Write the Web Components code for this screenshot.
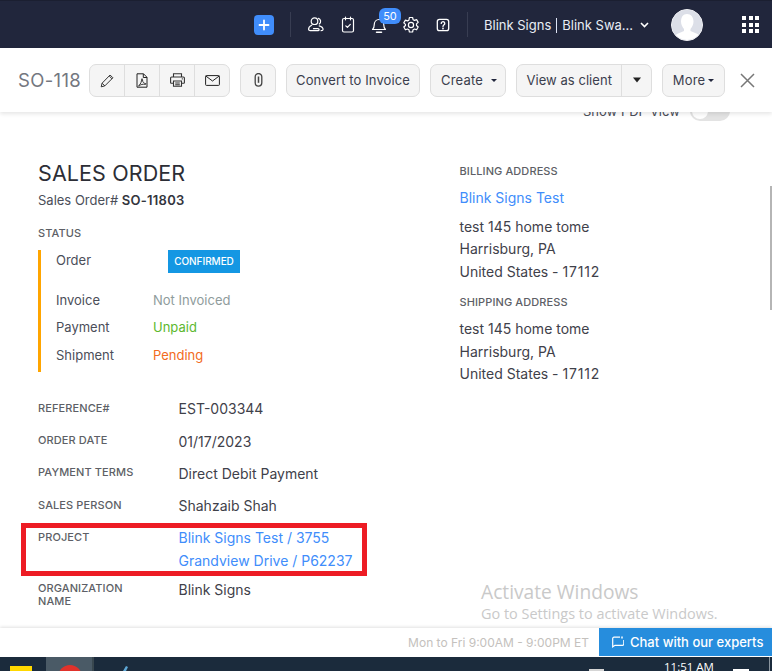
<!DOCTYPE html>
<html lang="en"><head><meta charset="utf-8"><title>Sales Order</title>
<style>html,body{margin:0;padding:0;height:100%;background:#fff;overflow:hidden}body{font-family:Inter,"Liberation Sans",sans-serif}</style>
</head><body>
<app-shell>
  <top-bar slot="top"></top-bar>
  <tool-bar slot="tools"></tool-bar>
  <order-view slot="main"></order-view>
  <help-bar slot="help"></help-bar>
  <task-bar slot="task"></task-bar>
</app-shell>
<script>
function def(name, html){
  customElements.define(name, class extends HTMLElement{
    constructor(){super();this.attachShadow({mode:'open'}).innerHTML=html;}
  });
}
def('app-shell',`<style>:host{display:flex;flex-direction:column;width:772px;height:671px;overflow:hidden}
.m{flex:1;min-height:0;display:flex;overflow:hidden;position:relative}</style>
<slot name="top"></slot><slot name="tools"></slot><div class="m"><slot name="main"></slot></div><slot name="help"></slot><slot name="task"></slot>`);

def('top-bar',`<style>:host{display:flex;align-items:center;flex:none;height:48px;background:#21263c;color:#fff;box-sizing:border-box;border-top:1px solid #1b1f31;font:13px Inter,sans-serif}
.plus{margin-left:254px;width:20px;height:20px;border-radius:4px;background:#408dfb;display:flex;align-items:center;justify-content:center}
.sep{width:1px;height:25px;background:#383d52}
.ic{display:flex;align-items:center;justify-content:center;width:18px;height:18px;position:relative}
svg{display:block}
.badge{position:absolute;left:9px;top:-8px;width:22px;height:16px;border-radius:6px;background:#408dfb;font-size:11px;line-height:16px;text-align:center;color:#fff}
.org{margin-left:16px;font-size:13px;color:#e8edf5;white-space:nowrap}
.org i{display:inline-block;width:1px;height:15px;background:#dfe4f5;vertical-align:-3px;margin:0 5px 0 5px}
.av{margin-left:22px;width:32px;height:32px;border-radius:50%;background:#dcdfe8;overflow:hidden;border:1px solid #f3f3f6;box-sizing:border-box}
.grid{margin-left:39px;display:grid;grid-template-columns:repeat(3,4px);gap:2.5px}.grid b{width:4px;height:4px;background:#fff;display:block}
</style>
<div class="plus"><svg width="12" height="12" viewBox="0 0 12 12"><path d="M6 1.500v9M1.500 6h9" stroke="#fff" stroke-width="1.800" stroke-linecap="round"/></svg></div>
<div class="sep" style="margin-left:16px"></div>
<div class="ic" style="margin-left:16px"><svg width="18" height="18" viewBox="0 0 18 18" fill="none" stroke="#fff" stroke-width="1.200" stroke-linecap="round"><circle cx="7.500" cy="5.200" r="3.300"/><path d="M11.500 2.400a3.200 3.200 0 0 1 .8 5.600M4.600 9.200C2.800 10 1.500 11.500 1.600 13.200c0 1.300 1.400 1.500 3 1.500h6.400c1.500 0 1.500-2 0-2H6.500M12.200 9.800c1.900.5 3.800 1.800 3.900 3.400 0 1-.8 1.500-2 1.500"/></svg></div>
<div class="ic" style="margin-left:14px"><svg width="16" height="18" viewBox="0 0 16 18" fill="none" stroke="#fff" stroke-width="1.200" stroke-linecap="round" stroke-linejoin="round"><rect x="2.500" y="2.500" width="11" height="13.500" rx="1.500"/><path d="M5.500 1v2.800M10.500 1v2.800M5.800 9.800l1.600 1.600 2.900-3"/></svg></div>
<div class="ic" style="margin-left:13px"><svg width="18" height="18" viewBox="0 0 18 18" fill="none" stroke="#fff" stroke-width="1.200" stroke-linecap="round" stroke-linejoin="round"><path d="M2.500 13.500c1.300-1 1.700-2.200 1.700-4.500 0-3 2-5.500 4.800-5.500s4.800 2.500 4.800 5.500c0 2.300.4 3.500 1.700 4.500z"/><path d="M6.500 16.300h5" stroke-width="1.500"/></svg><span class="badge">50</span></div>
<div class="ic" style="margin-left:14px"><svg width="18" height="18" viewBox="0 0 18 18" fill="none" stroke="#fff" stroke-width="1.200" stroke-linejoin="round"><path d="M7.400 1.500h3.200l.5 2.200 1.400.7 2.100-.8 1.600 2.800-1.700 1.500v1.600l1.700 1.500-1.600 2.800-2.100-.8-1.400.7-.5 2.300H7.400l-.5-2.300-1.400-.7-2.100.8-1.600-2.800 1.700-1.500V8.400L1.800 6.900l1.600-2.800 2.100.8 1.400-.7z"/><circle cx="9" cy="9" r="2.600"/></svg></div>
<div class="ic" style="margin-left:14px"><svg width="14" height="14" viewBox="0 0 16 16" fill="none" stroke="#fff" stroke-width="1.500" stroke-linecap="round"><rect x="1.500" y="1.500" width="13" height="13" rx="2.500"/><path d="M6 6.200a2 2 0 1 1 3.200 1.600c-.8.600-1.200 1-1.200 1.800"/><circle cx="8" cy="11.900" r=".4"/></svg></div>
<div class="sep" style="margin-left:15px"></div>
<div class="org"><span>Blink Signs</span><i></i><span>Blink Swa...</span></div>
<svg style="margin-left:7px" width="9" height="6" viewBox="0 0 9 6" fill="none" stroke="#fff" stroke-width="1.600"><path d="M1 1l3.500 3.500L8 1"/></svg>
<div class="av"><svg width="30" height="30" viewBox="0 0 30 30"><rect width="30" height="30" fill="#dcdfe8"/><path d="M15 4c4 0 6.500 3 6.500 7.500 0 3-1.500 6-3 7.500v2l7 3c1.500 1 2 2 2.500 6H2.500c.5-4 1-5 2.500-6l7-3v-2c-1.500-1.500-3-4.500-3-7.500C9 7 11 4 15 4z" fill="#fff"/></svg></div>
<div class="grid">${'<b></b>'.repeat(9)}</div>`);

def('tool-btn',`<style>:host{display:inline-flex;align-items:center;justify-content:center;box-sizing:border-box;height:33px;background:#f5f5f5;border:1px solid #dedede;border-radius:7px;font:13px Inter,sans-serif;color:#3b3e4d;white-space:nowrap}</style><slot></slot>`);

def('tool-bar',`<style>:host{display:flex;align-items:center;flex:none;height:64px;box-sizing:border-box;background:#fff;position:relative;z-index:2;box-shadow:0 2px 4px rgba(0,0,0,.1);padding-left:18px;font:13px Inter,sans-serif}
.id{font-size:18.500px;color:#74777f;width:71px;letter-spacing:.35px}
.g{display:flex;height:33px;box-sizing:border-box;background:#f5f5f5;border:1px solid #dedede;border-radius:7px}
.g>div{width:35px;display:flex;align-items:center;justify-content:center;border-right:1px solid #dedede}.g>div:last-child{border-right:0}
svg{display:block}
.car{display:inline-block;border-left:3px solid transparent;border-right:3px solid transparent;border-top:3px solid #21263c;margin-left:7px}
</style>
<div class="id">SO-118</div>
<div class="g" style="width:141px">
 <div><svg width="15" height="15" viewBox="0 0 15 15" fill="none" stroke="#333" stroke-width="1"><path d="M1.200 13.800l.9-3.600 8-8.200 2.800 2.800-8.100 8.100zM2.100 10.200l2.800 2.800M9.200 3l2.800 2.800"/></svg></div>
 <div><svg width="12" height="15" viewBox="0 0 12 15" fill="none" stroke="#222" stroke-width="1"><path d="M1 .8h6.500L11 4.300v9.900H1zM7.300.8v3.700H11"/><path d="M2.700 12.600c2-1.200 3-4.500 2.900-6.300 0-1 1-.8.900.3-.2 2.500 1.500 3.800 3 3.900 1 .1.700 1-.5.800-2-.3-4.500.2-5.700 1.500-.5.500-1 .2-.6-.2z" stroke-width=".9"/></svg></div>
 <div><svg width="15" height="14" viewBox="0 0 15 14" fill="none" stroke="#333" stroke-width="1.100"><path d="M3.500 4V.8h8V4M3.500 10.300H1.300a.7.700 0 0 1-.7-.7V5a1 1 0 0 1 1-1h11.800a1 1 0 0 1 1 1v4.600a.7.700 0 0 1-.7.700h-2.200"/><path d="M3.500 8h8v5.300h-8zM5.200 10h4.600M5.200 11.700h4.600"/><path d="M11.800 5.800h1" stroke-width="1.300"/></svg></div>
 <div><svg width="15" height="11" viewBox="0 0 15 11" fill="none" stroke="#222" stroke-width="1"><rect x=".6" y=".6" width="13.800" height="9.800" rx=".8"/><path d="M.8 1l6.700 5 6.700-5"/></svg></div>
</div>
<tool-btn style="width:36px;margin-left:10px"><svg width="9" height="14" viewBox="0 0 9 14" fill="none" stroke="#444" stroke-width="1.300"><path d="M1.200 3.800v6a3.300 3.300 0 0 0 6.600 0v-6a3.300 3.300 0 0 0-6.600 0z"/><path d="M4.500 3.500v6.300" stroke-width="1.500"/></svg></tool-btn>
<tool-btn style="width:134px;margin-left:10px;letter-spacing:.1px">Convert to Invoice</tool-btn>
<tool-btn style="width:76px;margin-left:10px;letter-spacing:.2px;padding-left:2px">Create<span class="car" style="margin-left:8px"></span></tool-btn>
<div class="g" style="width:136px;margin-left:10px;color:#3b3e4d;letter-spacing:.05px"><div style="width:106px;white-space:nowrap">View as client</div><div style="width:29px"><svg width="8" height="6" viewBox="0 0 8 6"><path d="M0 .5h8L4 5.500z" fill="#222"/></svg></div></div>
<tool-btn style="width:63px;margin-left:10px;letter-spacing:.15px">More<span class="car" style="margin-left:3px"></span></tool-btn>
<svg style="margin-left:15px" width="15" height="15" viewBox="0 0 15 15" fill="none" stroke="#777" stroke-width="1.500"><path d="M1 1l13 13M14 1L1 14"/></svg>`);

def('status-row',`<style>:host{display:grid;grid-template-columns:97px 1fr;align-items:start;font-size:13px;color:#4b4e59;line-height:20px}</style><span><slot name="k"></slot></span><span><slot></slot></span>`);
def('field-row',`<style>:host{display:grid;grid-template-columns:140.500px 1fr;align-items:start}
.k{font-size:11px;font-weight:500;color:#5d5f66;line-height:13px;letter-spacing:.1px;padding-top:var(--kp,3px)}
.v{font-size:14px;color:#3f414a;line-height:22.500px}</style><div class="k"><slot name="k"></slot></div><div class="v"><slot></slot></div>`);
def('sub-label',`<style>:host{display:block;font-size:11px;font-weight:500;color:#5d5f66;letter-spacing:.1px;line-height:14px}</style><slot></slot>`);
def('addr-lines',`<style>:host{display:block;font-size:14px;color:#3f414a;line-height:22.500px}</style><slot></slot>`);
def('status-tag',`<style>:host{display:inline-block;background:#1497e3;color:#fff;font-size:10px;font-weight:500;line-height:23px;height:23px;width:72px;text-align:center;margin-left:15px;letter-spacing:-.05px}</style><slot></slot>`);
def('pdf-switch',`<style>:host{display:flex;justify-content:flex-end;align-items:center;height:20px;margin-top:-11px;font-size:13px;color:#4b4e59;gap:10px;padding-right:42px}
.t{width:40px;height:20px;border-radius:10px;background:#e3e3e3;position:relative}.t::after{content:"";position:absolute;left:2px;top:2px;width:16px;height:16px;border-radius:50%;background:#fff}</style><span>Show PDF View</span><span class="t"></span>`);

def('order-view',`<style>:host{display:block;flex:1;font-family:Inter,sans-serif;position:relative;min-width:0}
.cols{display:grid;grid-template-columns:421.500px 1fr;padding:39px 0 0 38px}
.ad{padding-top:4px}
h1{margin:0;font-size:21.500px;font-weight:400;color:#2c2e36;line-height:27px;letter-spacing:.1px}
.no{font-size:13px;color:#4b4e59;line-height:18px;margin-top:4px}.no b{font-weight:600;color:#33353d;letter-spacing:.25px}
sub-label.st{margin-top:17px}
.bar{border-left:3px solid #ffa500;margin-top:10px;padding-left:15px;height:122px;box-sizing:border-box}
.bar status-row+status-row{margin-top:7.500px}
.bar status-row:first-child{height:32px}
.fields{margin-top:26px;display:flex;flex-direction:column}
.red{border:5px solid #ed1c24;margin:2.500px 0 0 -17px;width:346px;box-sizing:border-box;padding:0 0 0 12px;height:53.500px;display:block}
.red field-row{margin-top:-2px;--kp:5px}
a{color:#408dfb;text-decoration:none}
.red a{line-height:23px;display:block}
.ad a{font-size:14px;line-height:20px;display:block;margin-top:10px}
addr-lines{margin-top:7.600px}
.n{letter-spacing:.8px}
.sb{position:absolute;right:0;top:74px;width:2px;height:124px;background:#b5b5b5}
.wm{position:absolute;left:481px;top:467px;font-family:"Open Sans",sans-serif;color:#c9c9c9;pointer-events:none}
.wm div:first-child{font-size:19.200px;line-height:25px}.wm div+div{font-size:14.450px;line-height:20px}
</style>
<pdf-switch></pdf-switch>
<div class="cols">
 <div>
  <h1>SALES ORDER</h1>
  <div class="no">Sales Order# <b>SO-11803</b></div>
  <sub-label class="st">STATUS</sub-label>
  <div class="bar">
   <status-row><span slot="k">Order</span><status-tag>CONFIRMED</status-tag></status-row>
   <status-row><span slot="k">Invoice</span><span style="color:#8f9c9c">Not Invoiced</span></status-row>
   <status-row><span slot="k">Payment</span><span style="color:#5cb82e">Unpaid</span></status-row>
   <status-row><span slot="k">Shipment</span><span style="color:#f26b21">Pending</span></status-row>
  </div>
  <div class="fields">
   <field-row style="height:33px;--kp:4px"><span slot="k">REFERENCE#</span>EST-003344</field-row>
   <field-row style="height:32px"><span slot="k">ORDER DATE</span>01/17/2023</field-row>
   <field-row style="height:32px"><span slot="k">PAYMENT TERMS</span>Direct Debit Payment</field-row>
   <field-row style="height:25px;--kp:4px"><span slot="k">SALES PERSON</span>Shahzaib Shah</field-row>
   <div class="red"><field-row><span slot="k">PROJECT</span><a>Blink Signs Test / 3755<br>Grandview Drive / P62237</a></field-row></div>
   <field-row style="margin-top:3px"><span slot="k">ORGANIZATION<br>NAME</span>Blink Signs</field-row>
  </div>
 </div>
 <div class="ad">
  <sub-label>BILLING ADDRESS</sub-label>
  <a>Blink Signs Test</a>
  <addr-lines>test 145 home tome<br>Harrisburg, PA<br>United States - <span class="n">17112</span></addr-lines>
  <sub-label style="margin-top:12px">SHIPPING ADDRESS</sub-label>
  <addr-lines style="margin-top:9.400px">test 145 home tome<br>Harrisburg, PA<br>United States - <span class="n">17112</span></addr-lines>
 </div>
</div>
<div class="sb"></div>
<div class="wm"><div>Activate Windows</div><div>Go to Settings to activate Windows.</div></div>`);

def('help-bar',`<style>:host{display:flex;align-items:stretch;justify-content:flex-end;flex:none;height:29px;background:#fff;box-shadow:0 -1px 3px rgba(0,0,0,.12);position:relative;font:13px Inter,sans-serif}
.h{align-self:center;color:#c4c1bd;font-size:12px;margin-right:10px;white-space:nowrap}
.c{width:173px;box-sizing:border-box;background:#268ddd;color:#fff;display:flex;align-items:center;padding-left:13px;gap:6px;font-size:13px;font-weight:500;white-space:nowrap;margin-bottom:1px}</style>
<span class="h">Mon to Fri 9:00AM - 9:00PM ET</span>
<div class="c"><svg width="12" height="12" viewBox="0 0 12 12" fill="none" stroke="#fff" stroke-width="1.200"><path d="M8 1.200H2a1.300 1.300 0 0 0-1.300 1.300v8.300l2.300-1.500h7.500a1.300 1.300 0 0 0 1.300-1.300V4"/><path d="M10 .5v2" stroke-width="1.500"/></svg>Chat with our experts</div>`);

def('task-bar',`<style>:host{display:flex;flex:none;height:14px;background:#1b2b3c;position:relative;overflow:hidden;font:11.500px "Open Sans",sans-serif;color:#fff}
.y{width:22px;height:11px;background:#ffd800;margin:9px 0 0 10px}
.act{width:46px;margin-left:14px;background:#4a5a66;position:relative;border-right:2px solid #39474f}
.act::after{content:"";position:absolute;left:12px;top:8px;width:24px;height:24px;border-radius:50%;background:#e0322b}
.b{width:17px;height:14px;margin-left:19px;margin-top:9px;flex:none}
.t{position:absolute;left:664px;top:6px;line-height:8px;white-space:nowrap}
.w{position:absolute;left:733px;top:12px;width:16px;height:2px;background:#fff}.e{position:absolute;left:769px;top:0;width:1px;height:14px;background:#8b96a0}
.mini{position:absolute;left:589px;top:12px;width:15px;height:2px;background:#d5d5d5}</style>
<div class="y"></div><div class="act"></div>
<svg class="b" viewBox="0 0 17 14"><path d="M1 14C2 8 6 5 10 5l3-5 2 1-2 4c1 3 1 6 0 9z" fill="#5ea8d6"/></svg>
<span class="mini"></span><span class="t">11:51 AM</span><span class="w"></span><span class="e"></span>`);
</script>
</body></html>
